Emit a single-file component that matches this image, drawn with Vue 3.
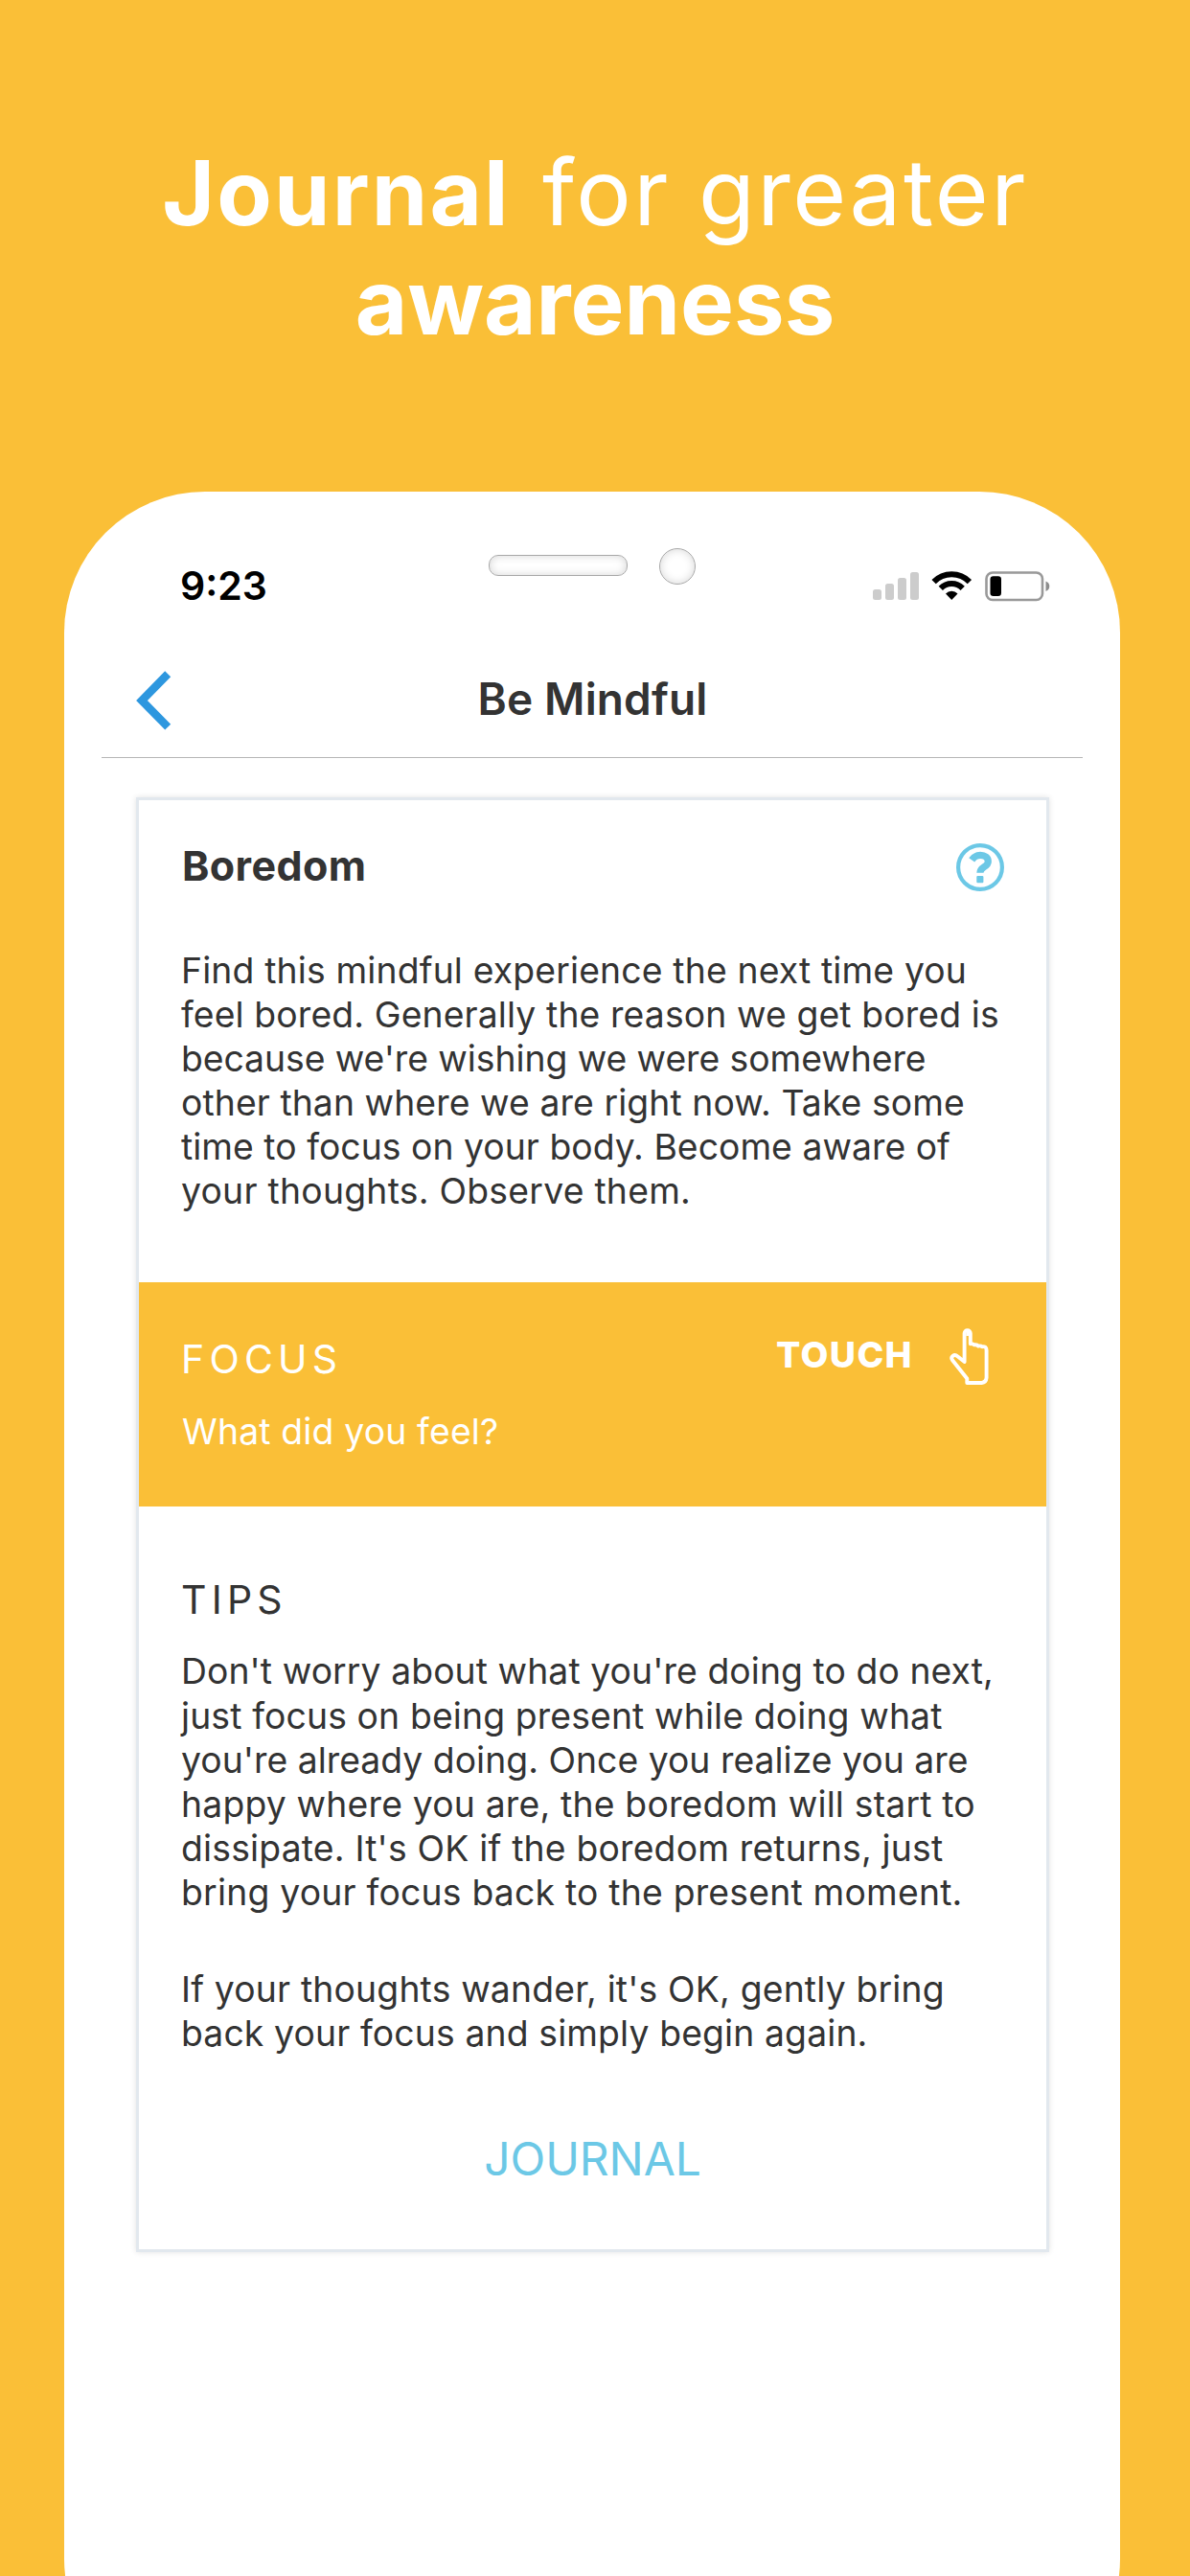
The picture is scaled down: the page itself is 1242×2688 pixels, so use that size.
<script setup>
// Each line carries its own tracking, in pixels.
const intro = [
  { text: 'Find this mindful experience the next time you', track: 0.16 },
  { text: 'feel bored. Generally the reason we get bored is', track: 0.13 },
  { text: "because we're wishing we were somewhere", track: -0.05 },
  { text: 'other than where we are right now. Take some', track: 0.09 },
  { text: 'time to focus on your body. Become aware of', track: 0.04 },
  { text: 'your thoughts. Observe them.', track: 0.26 },
]
const tips = [
  [
    { text: "Don't worry about what you're doing to do next,", track: 0.09 },
    { text: 'just focus on being present while doing what', track: 0.14 },
    { text: "you're already doing. Once you realize you are", track: 0.03 },
    { text: 'happy where you are, the boredom will start to', track: 0.2 },
    { text: "dissipate. It's OK if the boredom returns, just", track: 0.2 },
    { text: 'bring your focus back to the present moment.', track: 0.22 },
  ],
  [
    { text: "If your thoughts wander, it's OK, gently bring", track: 0.18 },
    { text: 'back your focus and simply begin again.', track: 0.14 },
  ],
]
const bars = [11, 17, 23, 29]
</script>

<template>
  <main class="page">
    <h1 class="headline">
      <div><b class="wide">Journal</b><span class="light"> for greater</span></div>
      <div><b>awareness</b></div>
    </h1>
    <section class="phone">
      <div class="status">
        <span class="time">9:23</span>
        <span class="speaker"></span>
        <span class="camera"></span>
        <div class="signal">
          <i v-for="h in bars" :key="h" :style="{ height: h + 'px' }"></i>
        </div>
        <svg class="wifi" width="43" height="30" viewBox="0 0 43 30">
          <g fill="none" stroke="#000" stroke-width="6">
            <path d="M2.6 11.1A26 26 0 0 1 39.9 11.1" />
            <path d="M9.8 17.9A16 16 0 0 1 32.7 17.9" />
          </g>
          <path d="M15 23.4A8.7 8.7 0 0 1 27.5 23.4L21.25 30Z" />
        </svg>
        <svg class="battery" width="68" height="32" viewBox="0 0 68 32">
          <rect x="1.5" y="1.5" width="58.5" height="28.5" rx="6.5" fill="none" stroke="#999" stroke-width="2.6" />
          <rect x="5.5" y="5.3" width="11.5" height="20.7" rx="3.2" />
          <path d="M63.5 10.5Q67.3 12 67.3 15.8T63.5 21Z" fill="#8c8c8c" />
        </svg>
      </div>
      <header class="nav">
        <svg width="37" height="62" viewBox="0 0 37 62">
          <path d="M33.2 3.2L6 31L33.2 58.6" fill="none" stroke="#2d97df" stroke-width="8.4" />
        </svg>
        <h2>Be Mindful</h2>
      </header>
      <article class="card">
        <div class="intro">
          <div class="card-head">
            <h3>Boredom</h3>
            <svg width="50" height="50" viewBox="0 0 50 50">
              <circle cx="25" cy="25" r="22.9" fill="none" stroke="#6cc8e6" stroke-width="4.2" />
              <path d="M16.2 17.4C18.8 13.6 21.6 12.4 25.2 12.4C30 12.4 33.3 15 33.3 18.9C33.3 25 24.9 24 24.9 30.8" fill="none" stroke="#6cc8e6" stroke-width="7.2" />
              <rect x="21.3" y="34" width="7.1" height="7.2" rx="1" fill="#6cc8e6" />
            </svg>
          </div>
          <p>
            <template v-for="l in intro" :key="l.text"><span :style="{ letterSpacing: l.track + 'px' }">{{ l.text }}</span><br /></template>
          </p>
        </div>
        <div class="focus">
          <div>
            <h4>FOCUS</h4>
            <p class="question">What did you feel?</p>
          </div>
          <div class="touch">
            <b>TOUCH</b>
            <svg width="42" height="60" viewBox="0 0 42 60" fill="none" stroke="#fff" stroke-width="3.9" stroke-linejoin="round">
              <path d="M18.3 57V52.5L3 33.3C.6 29.6 5 26.5 8.3 29.3L15.6 35V5.2A3.1 3.1 0 0 1 21.8 5.2V16.3Q24.2 15.6 25.6 17.4Q28.6 16.6 30 18.6Q32.4 17.9 34 19.2Q38.6 18.6 38.6 23V51.5Q38.2 56.5 33.5 57Z" />
              <path d="M17.3 6H20.2" stroke-width="4" />
            </svg>
          </div>
        </div>
        <div class="tips">
          <h4>TIPS</h4>
          <p v-for="(t, i) in tips" :key="i">
            <template v-for="l in t" :key="l.text"><span :style="{ letterSpacing: l.track + 'px' }">{{ l.text }}</span><br /></template>
          </p>
          <a>JOURNAL</a>
        </div>
      </article>
    </section>
  </main>
</template>

<style>
body { margin: 0; background: #fabf37; }
</style>

<style scoped>
.page {
  width: 1242px;
  height: 2688px;
  overflow: hidden;
  box-sizing: border-box;
  padding-top: 143px;
  background: #fabf37;
  color: #333;
  font-family: Inter, "Liberation Sans", sans-serif;
}
h1, h2, h3, h4, p { margin: 0; font-weight: 400; }
.headline {
  height: 370px;
  color: #fff;
  font-size: 94px;
  line-height: 115px;
  text-align: center;
}
.headline div { height: 115px; white-space: pre; }
.headline b { font-weight: 700; }
.headline .wide { letter-spacing: 2.1px; }
.light { margin-left: 4px; font-size: 96px; font-weight: 400; letter-spacing: 2.4px; }
.phone {
  width: 1102px;
  height: 2304px;
  margin-left: 67px;
  background: #fff;
  border-radius: 147px;
}
.status { display: flex; align-items: flex-start; height: 160px; }
.time {
  width: 322px;
  margin: 73px 0 0 121px;
  color: #000;
  font-size: 41px;
  font-weight: 600;
  line-height: 50px;
}
.speaker, .camera {
  box-sizing: border-box;
  border: 1px solid #a8a8a8;
  box-shadow: inset 0 0 10px rgba(0, 0, 0, .16);
}
.speaker { width: 145px; height: 22px; margin-top: 66px; border-radius: 10px; }
.camera { width: 38px; height: 38px; margin: 59px 0 0 33px; border-radius: 50%; }
.signal { display: flex; align-items: flex-end; gap: 4.2px; height: 30px; margin: 83px 0 0 185px; }
.signal i { width: 8.8px; border-radius: 2.5px; background: #ccc; }
.wifi { margin: 83px 0 0 13px; }
.battery { margin: 83px 0 0 13px; }
.nav {
  display: flex;
  width: 1024px;
  height: 117px;
  margin-left: 39px;
  border-bottom: 1px solid #b6b6b6;
}
.nav svg { margin: 27px 0 0 36px; }
.nav h2 {
  flex: 1;
  margin: 26px 72px 0 0;
  text-align: center;
  font-size: 46px;
  font-weight: 600;
  line-height: 60px;
  letter-spacing: .15px;
}
.card {
  width: 947px;
  height: 1512px;
  margin: 41px 0 0 75px;
  border: 3px solid #e2e8ee;
  box-shadow: 0 0 6px rgba(0, 0, 0, .12);
}
.intro { height: 503px; box-sizing: border-box; padding: 45px 44px 0; }
.card-head { display: flex; justify-content: space-between; height: 50px; margin-bottom: 59.6px; }
h3 { padding-left: 1px; font-size: 43px; font-weight: 700; line-height: 47px; letter-spacing: .4px; }
p { font-size: 37.3px; line-height: 46.1px; white-space: nowrap; }
h4 { font-size: 41px; line-height: 50px; letter-spacing: 5.2px; margin-bottom: 27.7px; }
.question { padding-left: 1px; letter-spacing: .18px; }
.focus {
  display: flex;
  justify-content: space-between;
  height: 234.3px;
  box-sizing: border-box;
  padding: 55px 59px 0 44px;
  background: #fabf37;
  color: #fff;
}
.touch { display: flex; margin-top: -7px; gap: 38px; }
.touch b { margin-top: 6px; font-size: 37.4px; line-height: 44px; font-weight: 800; letter-spacing: 1.4px; }
.tips { padding: 71.5px 44px 0; }
.tips p { margin-bottom: 54.9px; }
.tips a { display: block; margin-top: 78.2px; color: #6cc8e6; font-size: 48px; line-height: 60px; text-align: center; letter-spacing: -.1px; }
</style>
